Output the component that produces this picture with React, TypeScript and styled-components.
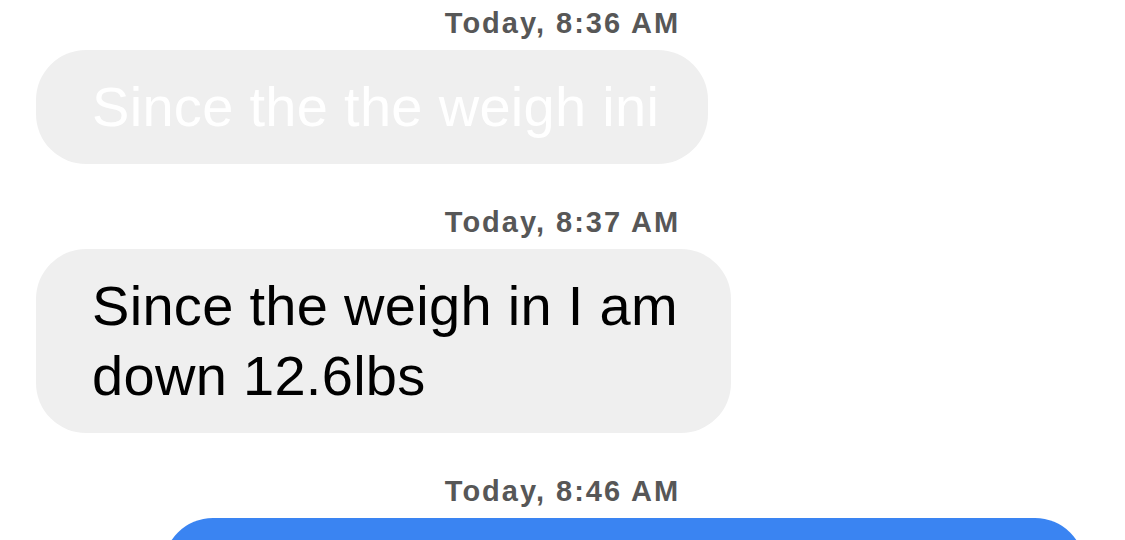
import React from 'react'
import styled, { createGlobalStyle } from 'styled-components'

const GlobalStyle = createGlobalStyle`
  html, body {
    margin: 0;
    padding: 0;
    background: #ffffff;
    overflow: hidden;
  }
  body {
    font-family: "Liberation Sans", Arial, sans-serif;
  }
`

const Thread = styled.div`
  display: flex;
  flex-direction: column;
  padding: 5px 40px 0 36px;
`
const Group = styled.div<{ $first?: boolean }>`
  display: flex;
  flex-direction: column;
  margin-top: ${(p) => (p.$first ? '0' : '40px')};
`
const Stamp = styled.div`
  align-self: center;
  margin-left: 4px;
  margin-bottom: 9px;
  font-size: 29px;
  line-height: 36px;
  font-weight: 700;
  letter-spacing: 2px;
  color: #575757;
`
const Bubble = styled.div<{ $width: number; $outgoing?: boolean; $faded?: boolean }>`
  box-sizing: border-box;
  width: ${(p) => p.$width}px;
  align-self: ${(p) => (p.$outgoing ? 'flex-end' : 'flex-start')};
  padding: 22px 40px 22px 56px;
  border-radius: 50px;
  font-size: 56px;
  line-height: 70px;
  letter-spacing: 0.3px;
  color: ${(p) => (p.$faded ? '#ffffff' : '#000000')};
  background-color: ${(p) => (p.$outgoing ? '#3a84f2' : '#efefef')};
  min-height: ${(p) => (p.$outgoing ? '120px' : '0')};
  white-space: pre-line;
`

const App: React.FC = () => {
  return (
    <>
      <GlobalStyle />
      <Thread>
        <Group $first>
          <Stamp>Today, 8:36 AM</Stamp>
          <Bubble $width={672} $faded>
            Since the the weigh ini
          </Bubble>
        </Group>
        <Group>
          <Stamp>Today, 8:37 AM</Stamp>
          <Bubble $width={695}>{'Since the weigh in I am\ndown 12.6lbs'}</Bubble>
        </Group>
        <Group>
          <Stamp>Today, 8:46 AM</Stamp>
          <Bubble $width={922} $outgoing />
        </Group>
      </Thread>
    </>
  )
}

export default App
